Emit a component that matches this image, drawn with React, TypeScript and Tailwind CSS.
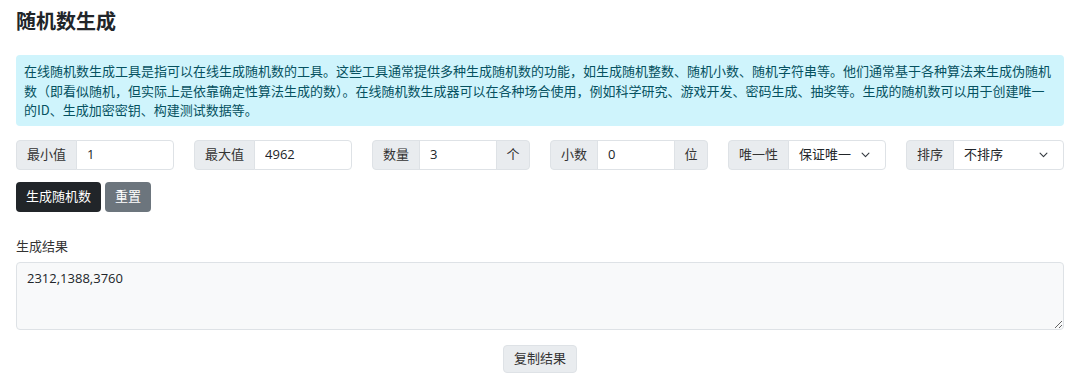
import React, { useState } from 'react';

const font = { fontFamily: '"Open Sans", "Noto Sans CJK SC", sans-serif' };
const cjkFont = { fontFamily: '"Noto Sans CJK SC", "Open Sans", sans-serif' };

const Chevron: React.FC = () => (
  <svg className="w-[11px] h-[11px] text-[#343a40]" viewBox="0 0 16 16" fill="none" stroke="currentColor" strokeWidth={1.6} strokeLinecap="round" strokeLinejoin="round">
    <path d="M3 6l5 5 5-5" />
  </svg>
);

const App: React.FC = () => {
  const [min, setMin] = useState('1');
  const [max, setMax] = useState('4962');
  const [count, setCount] = useState('3');
  const [decimals, setDecimals] = useState('0');
  const [result] = useState('2312,1388,3760');

  const addon = 'flex items-center px-[10px] bg-[#e9ecef] border border-[#dee2e6] text-[#333] whitespace-nowrap';
  const field = 'min-w-0 flex-1 px-[10px] bg-white border border-[#dee2e6] text-[#212529] outline-none';

  return (
    <div className="w-[1080px] px-4 pt-[9px] text-[13px] text-[#212529] bg-white" style={font}>
      <h1 className="text-[20px] font-bold leading-[26px] text-[#212529]">随机数生成</h1>

      {/* intro */}
      <div className="mt-[20px] rounded-[4px] bg-[#cff4fc] pl-2 pr-3 py-[6px] leading-[19.5px] text-[#055160]" style={cjkFont}>
        在线随机数生成工具是指可以在线生成随机数的工具。这些工具通常提供多种生成随机数的功能，如生成随机整数、随机小数、随机字符串等。他们通常基于各种算法来生成伪随机数（即看似随机，但实际上是依靠确定性算法生成的数）。在线随机数生成器可以在各种场合使用，例如科学研究、游戏开发、密码生成、抽奖等。生成的随机数可以用于创建唯一的ID、生成加密密钥、构建测试数据等。
      </div>

      {/* options */}
      <div className="mt-[14px] grid grid-cols-6 gap-5 h-[30px]">
        <div className="flex h-[30px]">
          <span className={`${addon} rounded-l-[4px]`}>最小值</span>
          <input className={`${field} -ml-px rounded-r-[4px]`} value={min} onChange={e => setMin(e.target.value)} />
        </div>
        <div className="flex h-[30px]">
          <span className={`${addon} rounded-l-[4px]`}>最大值</span>
          <input className={`${field} -ml-px rounded-r-[4px]`} value={max} onChange={e => setMax(e.target.value)} />
        </div>
        <div className="flex h-[30px]">
          <span className={`${addon} rounded-l-[4px]`}>数量</span>
          <input className={`${field} -ml-px`} value={count} onChange={e => setCount(e.target.value)} />
          <span className={`${addon} -ml-px rounded-r-[4px] w-[34px] justify-center px-0`}>个</span>
        </div>
        <div className="flex h-[30px]">
          <span className={`${addon} rounded-l-[4px]`}>小数</span>
          <input className={`${field} -ml-px`} value={decimals} onChange={e => setDecimals(e.target.value)} />
          <span className={`${addon} -ml-px rounded-r-[4px] w-[34px] justify-center px-0`}>位</span>
        </div>
        <div className="flex h-[30px]">
          <span className={`${addon} rounded-l-[4px]`}>唯一性</span>
          <div className="-ml-px flex flex-1 items-center justify-between pl-[10px] pr-[14px] bg-white border border-[#dee2e6] rounded-r-[4px]">
            <span>保证唯一</span>
            <Chevron />
          </div>
        </div>
        <div className="flex h-[30px]">
          <span className={`${addon} rounded-l-[4px]`}>排序</span>
          <div className="-ml-px flex flex-1 items-center justify-between pl-[10px] pr-[14px] bg-white border border-[#dee2e6] rounded-r-[4px]">
            <span>不排序</span>
            <Chevron />
          </div>
        </div>
      </div>

      {/* actions */}
      <div className="mt-3 flex gap-1">
        <button className="h-[30px] px-[10px] rounded-[4px] bg-[#212529] text-white">生成随机数</button>
        <button className="h-[30px] px-[10px] rounded-[4px] bg-[#6c757d] text-white">重置</button>
      </div>

      {/* result */}
      <div className="mt-[25px] leading-[18px] text-[#333]">生成结果</div>
      <textarea
        readOnly
        className="mt-[7px] block w-full h-[68px] rounded-[4px] border border-[#dee2e6] bg-[#f8f9fa] px-[10px] py-[5px] text-[13px] leading-[20px] text-[#212529] outline-none"
        style={font}
        value={result}
      />

      <div className="mt-[15px] flex justify-center">
        <button className="h-[28px] px-[10px] rounded-[4px] bg-[#e9ecef] border border-[#dee2e6] text-[#333]">复制结果</button>
      </div>
    </div>
  );
};

export default App;
